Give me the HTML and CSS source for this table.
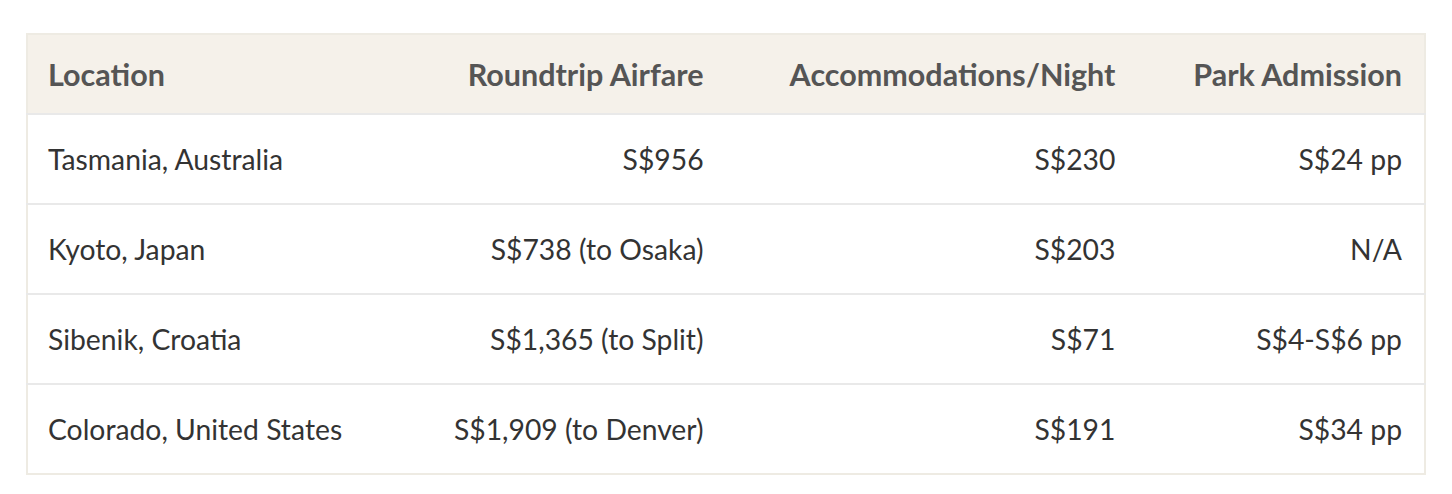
FILE: index.html
```html
<!DOCTYPE html>
<html>
<head>
<meta charset="utf-8">
<link rel="stylesheet" href="styles.css">
</head>
<body>
<div class="wrap">
<table class="costs">
  <colgroup>
    <col class="c1"><col class="c2"><col class="c3"><col class="c4">
  </colgroup>
  <thead>
    <tr><th class="left">Location</th><th>Roundtrip Airfare</th><th>Accommodations/Night</th><th>Park Admission</th></tr>
  </thead>
  <tbody>
    <tr><td class="left">Tasmania, Australia</td><td>S$956</td><td>S$230</td><td>S$24 pp</td></tr>
    <tr><td class="left">Kyoto, Japan</td><td>S$738 (to Osaka)</td><td>S$203</td><td>N/A</td></tr>
    <tr><td class="left">Sibenik, Croatia</td><td>S$1,365 (to Split)</td><td>S$71</td><td>S$4-S$6 pp</td></tr>
    <tr><td class="left">Colorado, United States</td><td>S$1,909 (to Denver)</td><td>S$191</td><td>S$34 pp</td></tr>
  </tbody>
</table>
</div>
</body>
</html>
```
FILE: styles.css
```css
html, body { margin: 0; padding: 0; background: #fff; }
.wrap { padding: 33px 26px 0 26px; }
.costs {
  width: 1400px;
  border-collapse: collapse;
  border: 2px solid #eeebe3;
  font-family: Lato, "Liberation Sans", sans-serif;
  font-size: 28.3px;
  color: #333;
}
.c1 { width: 350px; }
.c2 { width: 350px; }
.c3 { width: 412px; }
.c4 { width: 288px; }
.costs th {
  background: #f5f1ea;
  color: #555;
  font-size: 30.5px;
  font-weight: 700;
  text-align: right;
  height: 78px;
  padding: 0 22px;
}
.costs td {
  text-align: right;
  height: 88px;
  padding: 0 22px;
  border-top: 2px solid #e9e9e9;
}
.costs .left { text-align: left; padding-left: 20px; }
```
